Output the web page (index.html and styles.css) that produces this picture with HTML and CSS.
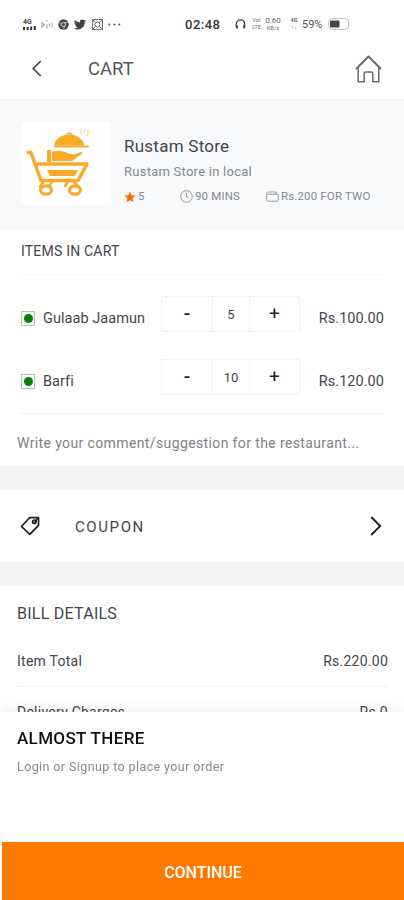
FILE: index.html
```
<!DOCTYPE html>
<html lang="en">
<head>
    <meta charset="UTF-8">
    <meta name="viewport" content="width=device-width, initial-scale=1.0">
    <title>Cart</title>
    <link rel="stylesheet" href="styles.css">
</head>
<body>
    <div class="status-bar">
        <div class="status-left">
            <div class="signal">
                <span class="signal-label">4G</span>
                <svg width="13" height="4" viewBox="0 0 13 4" fill="#333"><path d="M0 1h2v3H0zM3.6 1h2v3h-2zM7.2 .5h2V4h-2zM10.8 0h2v4h-2z"/></svg>
            </div>
            <svg class="icon-cast" width="12" height="11" viewBox="0 0 12 11" fill="none" stroke="#999" stroke-width="1"><path d="M1 3v6M3 4.5v3M6 1v1.500M6 5v4.500M8.500 4.500v3M10.500 3.500c1 1.500 1 3 0 4.500M1 3.500c2 1 2 3.500 0 4.500"/></svg>
            <svg class="icon-chrome" width="11" height="11" viewBox="0 0 11 11"><circle cx="5.500" cy="5.500" r="5.200" fill="#444"/><circle cx="5.500" cy="5.500" r="2.100" fill="#444" stroke="#ddd" stroke-width="1"/><path d="M5.500 3.400h4.500M3.700 6.600L1.500 3M7.300 6.600L5.200 10.300" stroke="#ccc" stroke-width=".8"/></svg>
            <svg class="icon-twitter" width="12" height="11" viewBox="0 0 24 22" fill="#444"><path d="M24 3.500a10 10 0 0 1-2.800.8A5 5 0 0 0 23.300 1.500a10 10 0 0 1-3.100 1.200 4.900 4.900 0 0 0-8.400 4.500A14 14 0 0 1 1.700 2a4.900 4.900 0 0 0 1.500 6.600A4.900 4.900 0 0 1 1 8a4.900 4.900 0 0 0 3.900 4.900 5 5 0 0 1-2.200.1 4.900 4.900 0 0 0 4.600 3.400A9.900 9.900 0 0 1 0 18.500 14 14 0 0 0 21.500 6 10 10 0 0 0 24 3.500z"/></svg>
            <svg class="icon-gallery" width="11" height="11" viewBox="0 0 11 11" fill="none" stroke="#666"><rect x=".6" y=".6" width="9.800" height="9.800"/><circle cx="5.500" cy="5.500" r="2.500"/><path d="M1 1l2.500 2.500M10 1L7.500 3.500M1 10l2.500-2.500M10 10L7.500 7.500"/></svg>
            <svg class="icon-more" width="13" height="3" viewBox="0 0 13 3" fill="#555"><circle cx="1.300" cy="1.500" r="1"/><circle cx="6.300" cy="1.500" r="1"/><circle cx="11.300" cy="1.500" r="1"/></svg>
        </div>
        <span class="clock">02:48</span>
        <div class="status-right">
            <svg width="11" height="11" viewBox="0 0 11 11" fill="none" stroke="#444" stroke-width="1.200"><path d="M1.300 7V5a4.200 4.200 0 0 1 8.400 0v2"/><path d="M1.800 6v3.500M9.200 6v3.500" stroke-width="2"/></svg>
            <div class="stack volte"><span>VoI</span><span>LTE</span></div>
            <div class="stack speed"><span>0.60</span><span>KB/s</span></div>
            <div class="stack network"><span>4G</span><span>↑↓</span></div>
            <span class="battery-text">59%</span>
            <svg class="icon-battery" width="22" height="12" viewBox="0 0 22 12"><rect x=".7" y=".7" width="20" height="10.600" rx="3" fill="#fff" stroke="#bbb"/><rect x="2" y="2.500" width="9.500" height="7" rx="1" fill="#444"/></svg>
        </div>
    </div>

    <header class="header">
        <svg class="back" width="10" height="17" viewBox="0 0 10 17" fill="none" stroke="#444" stroke-width="1.700"><path d="M8.800 1L1.200 8.500 8.800 16"/></svg>
        <h1>CART</h1>
        <svg class="home" width="27" height="28" viewBox="0 0 27 28" fill="none" stroke="#666b70" stroke-width="1.500" stroke-linejoin="round"><path d="M1 14L13.500 1.500 26 14" stroke-width="2"/><path d="M3.200 13v13.800h6V18.500q0-1.500 1.500-1.500h5.600q1.500 0 1.500 1.500v8.300h6V13"/></svg>
    </header>

    <section class="store">
        <div class="store-logo">
            <svg width="66" height="68" viewBox="0 0 66 68" fill="none" stroke="#fbaa28" stroke-width="4" stroke-linecap="round" stroke-linejoin="round">
                <path d="M28 16.500c1-7 7.500-11 15-11s14 4 15.500 11z" fill="#fbaa28" stroke="none"/>
                <path d="M29 17.500h33" stroke-width="2.200"/>
                <path d="M41 5.500q2.500-3 5 0" stroke-width="1.500"/>
                <path d="M55 1v4M58 3l1-2M62 1v4M60 6h2" stroke-width="1" opacity=".6"/>
                <path d="M21 21h4v12h-4zM26 22.500c7-1 12-1 16 2l6 1 7-2.500c1.500 0 1.500 1.500 0 2.500l-9 6.500H26z" fill="#fbaa28" stroke="none"/>
                <path d="M2 23.500h3L15 51.500h37L61 35H12" stroke-width="3.500"/>
                <path d="M21 41h31l-3.500 6H24z" fill="#fbaa28" stroke="none"/>
                <path d="M17 53l-3 5M48 53l5 5M26 53l-3 4M42 53l-3 4" stroke-width="2.500"/>
                <ellipse cx="20" cy="61" rx="5.500" ry="4.200" stroke-width="3.200"/>
                <ellipse cx="49" cy="61" rx="5.500" ry="4.200" stroke-width="3.200"/>
            </svg>
        </div>
        <div class="store-info">
            <h2>Rustam Store</h2>
            <p class="store-desc">Rustam Store in local</p>
            <div class="store-meta">
                <span class="meta rating"><svg width="12" height="12" viewBox="0 0 24 24" fill="#fa6b0c"><path d="M12 1l3.300 7.300 8 .9-6 5.300 1.700 7.900L12 18.400 5 22.400l1.700-7.900-6-5.300 8-.9z"/></svg>5</span>
                <span class="meta time"><svg width="13" height="13" viewBox="0 0 13 13" fill="none" stroke="#999" stroke-width="1"><circle cx="6.500" cy="6.500" r="5.800"/><path d="M6.500 2.800v4l2 1"/></svg>90 MINS</span>
                <span class="meta cost"><svg width="13" height="11" viewBox="0 0 13 11" fill="none" stroke="#999" stroke-width="1"><path d="M1.500 3.200h9.800q1 0 1 1v5q0 1-1 1H1.700q-1 0-1-1V2.500Q.7 1 2.200 1h8v2"/></svg>Rs.200 FOR TWO</span>
            </div>
        </div>
    </section>

    <section class="items">
        <h3>ITEMS IN CART</h3>
        <div class="item">
            <span class="veg"></span>
            <span class="item-name">Gulaab Jaamun</span>
            <div class="stepper">
                <button class="minus">-</button>
                <span class="qty">5</span>
                <button class="plus">+</button>
            </div>
            <span class="price">Rs.100.00</span>
        </div>
        <div class="item">
            <span class="veg"></span>
            <span class="item-name">Barfi</span>
            <div class="stepper">
                <button class="minus">-</button>
                <span class="qty">10</span>
                <button class="plus">+</button>
            </div>
            <span class="price">Rs.120.00</span>
        </div>
        <p class="comment">Write your comment/suggestion for the restaurant...</p>
    </section>

    <section class="coupon">
        <svg width="20" height="20" viewBox="0 0 20 20" fill="none" stroke="#1c1c1c" stroke-width="1.700" stroke-linejoin="round"><path d="M1.500 10.500L9.500 1.700l9-.2v7.800L9.800 18.400z"/><path d="M18 2l-3.500 4.500" stroke-width="1.300"/><circle cx="14.300" cy="5.700" r="1.700"/></svg>
        <span class="coupon-label">COUPON</span>
        <svg width="12" height="20" viewBox="0 0 12 20" fill="none" stroke="#1c1c1c" stroke-width="1.800"><path d="M1.200 1l9 9-9 9"/></svg>
    </section>

    <section class="bill">
        <h3>BILL DETAILS</h3>
        <div class="bill-row"><span>Item Total</span><span>Rs.220.00</span></div>
        <div class="bill-row"><span>Delivery Charges</span><span>Rs.0</span></div>
    </section>

    <div class="checkout">
        <h2>ALMOST THERE</h2>
        <p>Login or Signup to place your order</p>
        <button class="continue">CONTINUE</button>
    </div>
</body>
</html>
```

FILE: styles.css
```
:root {
    --orange: #ff7a00;
    --text: #43464b;
    --muted: #84898f;
    --line: #f1f1f1;
    --gap: #f3f3f3;
}

* {
    margin: 0;
    padding: 0;
    box-sizing: border-box;
}

body {
    height: 900px;
    overflow: hidden;
    display: flex;
    flex-direction: column;
    background-color: #fff;
    color: var(--text);
    font-family: Roboto, sans-serif;
    font-size: 14px;
}

h1, h2, h3 {
    font-weight: 400;
}

button {
    border: none;
    background: none;
    font-family: inherit;
}

svg {
    flex-shrink: 0;
}

/* status bar */
.status-bar {
    height: 48px;
    display: flex;
    align-items: center;
    padding-left: 23px;
}

.status-left {
    display: flex;
    align-items: center;
    width: 162px;
}

.signal {
    display: flex;
    flex-direction: column;
    width: 13px;
}

.signal-label {
    font-size: 7px;
    line-height: 7px;
    font-weight: 700;
}

.icon-cast {
    margin-left: 5px;
}

.icon-chrome,
.icon-twitter {
    margin-left: 5px;
}

.icon-gallery {
    margin-left: 6px;
}

.icon-more {
    margin-left: 5px;
}

.clock {
    width: 50px;
    font-size: 13px;
    font-weight: 500;
    letter-spacing: 0.5px;
    color: #333;
}

.status-right {
    display: flex;
    align-items: center;
}

.stack {
    display: flex;
    flex-direction: column;
    align-items: center;
    font-size: 5.500px;
    line-height: 7px;
    color: #666;
}

.volte {
    width: 11px;
    margin-left: 5px;
}

.speed {
    width: 18px;
    margin-left: 2px;
}

.speed span:first-child {
    font-size: 8px;
    line-height: 9px;
}

.network {
    width: 10px;
    margin-left: 7px;
    font-weight: 700;
}

.battery-text {
    width: 22px;
    margin-left: 3px;
    font-size: 11px;
    color: #555;
}

.icon-battery {
    margin-left: 4px;
}

/* header */
.header {
    height: 53px;
    display: flex;
    align-items: center;
    padding: 0 22px 10px 32px;
    border-bottom: 2px solid #f3f4f7;
}

.header h1 {
    flex: 1;
    margin-left: 46px;
    font-size: 18.500px;
    color: #55585c;
}

/* store */
.store {
    height: 129px;
    display: flex;
    padding: 21px 20px 0 21px;
    background-color: #f8f9fb;
}

.store-logo {
    width: 90px;
    height: 83px;
    padding: 7px 0 0 5px;
    background-color: #fff;
}

.store-info {
    flex: 1;
    margin-left: 13px;
    padding-top: 14px;
}

.store-info h2 {
    font-size: 17px;
    line-height: 20px;
    letter-spacing: 0.25px;
}

.store-desc {
    margin-top: 8px;
    font-size: 13px;
    line-height: 16px;
    letter-spacing: 0.250px;
    color: var(--muted);
}

.store-meta {
    display: flex;
    margin-top: 9px;
    font-size: 11.500px;
    line-height: 15px;
    letter-spacing: 0.150px;
    color: var(--muted);
}

.meta {
    display: flex;
    align-items: center;
    gap: 2px;
    white-space: nowrap;
}

.rating {
    width: 56px;
}

.time {
    width: 86px;
}

/* items */
.items {
    height: 236px;
    padding: 12px 20px 0 21px;
}

.items h3 {
    height: 33px;
    margin-bottom: 7px;
    font-size: 14px;
    line-height: 18px;
    letter-spacing: 0.2px;
    border-bottom: 1px solid #f8f8f8;
}

.item {
    height: 63px;
    display: flex;
    align-items: center;
}

.veg {
    width: 14px;
    height: 15px;
    margin-top: 10px;
    display: flex;
    align-items: center;
    justify-content: center;
    border: 1px solid #a9cfa9;
}

.veg::before {
    content: "";
    width: 9px;
    height: 9px;
    border-radius: 50%;
    background-color: #088008;
}

.item-name {
    width: 118px;
    margin-left: 8px;
    padding-top: 9px;
    font-size: 14.500px;
    letter-spacing: 0.05px;
}

.stepper {
    width: 139px;
    height: 36px;
    display: grid;
    grid-template-columns: 50px 38px 1fr;
    border: 1px solid var(--line);
    border-radius: 2px;
}

.stepper button {
    font-size: 19px;
    line-height: 32px;
    color: #222;
}

.minus {
    font-weight: 500;
}

.qty {
    text-align: center;
    font-size: 13px;
    line-height: 35px;
    border-left: 1px solid var(--line);
    border-right: 1px solid var(--line);
}

.price {
    margin-left: auto;
    padding-top: 9px;
    font-size: 14.500px;
    letter-spacing: 0.05px;
}

.comment {
    margin: 5px 0 0;
    padding-top: 20px;
    border-top: 1px solid var(--line);
    font-size: 14px;
    line-height: 18px;
    letter-spacing: 0.380px;
    text-indent: -4px;
    white-space: nowrap;
    color: #7d8287;
}

/* coupon */
.coupon {
    height: 120px;
    display: flex;
    align-items: center;
    padding: 0 22px 0 20px;
    border-top: 24px solid var(--gap);
    border-bottom: 24px solid var(--gap);
}

.coupon-label {
    flex: 1;
    margin-left: 35px;
    padding-top: 1px;
    font-size: 15px;
    letter-spacing: 1.600px;
}

/* bill */
.bill {
    padding: 18px 16px 0 17px;
}

.bill h3 {
    font-size: 16px;
    line-height: 20px;
    letter-spacing: 0.250px;
}

.bill-row {
    height: 50px;
    display: flex;
    justify-content: space-between;
    align-items: center;
    border-bottom: 1px solid var(--line);
    font-size: 14px;
    letter-spacing: 0.250px;
}

.bill h3 + .bill-row {
    height: 63px;
    padding-top: 12px;
}

/* bottom sheet */
.checkout {
    position: fixed;
    left: 0;
    right: 0;
    bottom: 0;
    height: 188px;
    display: flex;
    flex-direction: column;
    padding: 16px 0 0 17px;
    background-color: #fff;
    box-shadow: 0 -2px 12px rgba(0, 0, 0, 0.07);
}

.checkout h2 {
    font-size: 17px;
    line-height: 20px;
    font-weight: 500;
    letter-spacing: 0.350px;
    color: #111;
}

.checkout p {
    margin-top: 10px;
    font-size: 12.500px;
    line-height: 17px;
    letter-spacing: 0.4px;
    color: var(--muted);
}

.continue {
    height: 58px;
    margin: auto 0 0 -15px;
    padding-top: 2px;
    background-color: var(--orange);
    color: #fff;
    font-size: 16px;
    font-weight: 500;
}
```
